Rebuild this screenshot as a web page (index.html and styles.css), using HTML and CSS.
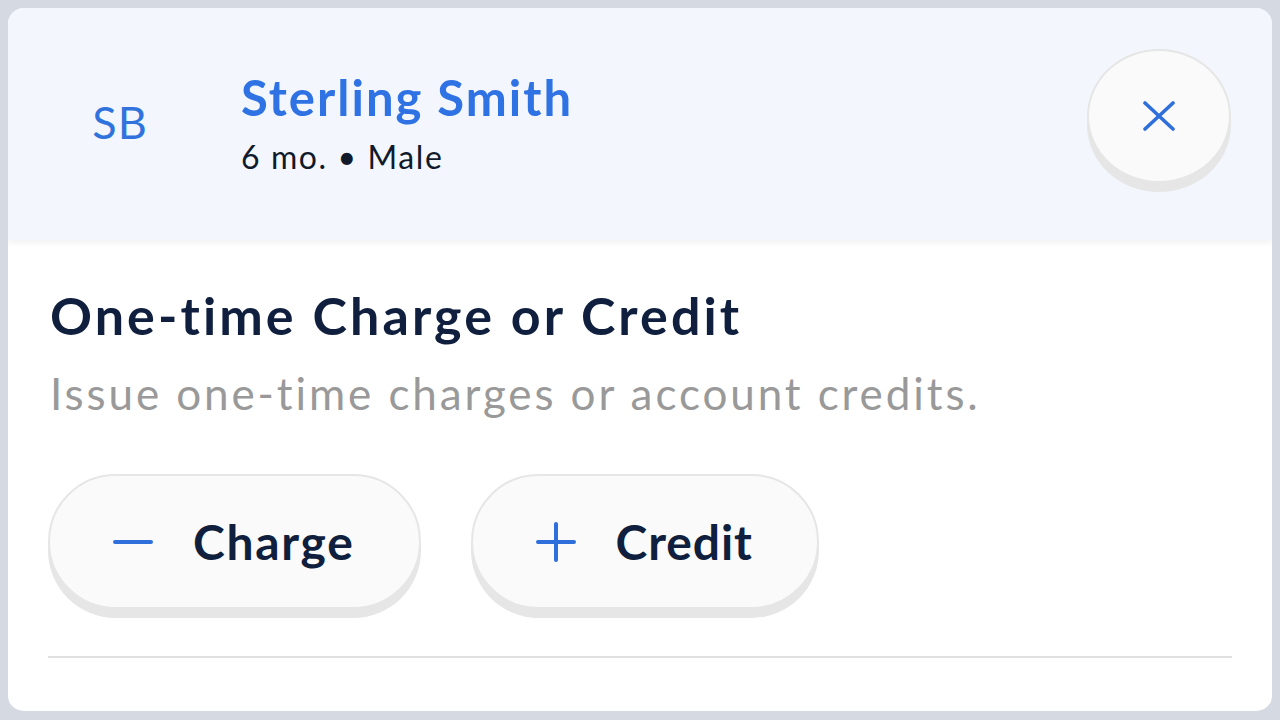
FILE: index.html
```html
<!DOCTYPE html>
<html lang="en">
<head>
<meta charset="utf-8">
<title>One-time Charge or Credit</title>
<link rel="stylesheet" href="styles.css">
</head>
<body>
<div class="frame">
  <header class="header">
    <div class="avatar">SB</div>
    <div class="who">
      <div class="name">Sterling Smith</div>
      <div class="meta">6 mo. • Male</div>
    </div>
    <button class="close" aria-label="Close">
      <svg width="32" height="30" viewBox="0 0 32 30"><path d="M2 2 L30 28 M30 2 L2 28" stroke="#2f6fdc" stroke-width="3.6" stroke-linecap="round" fill="none"/></svg>
    </button>
  </header>
  <main class="body">
    <h1 class="title">One-time Charge or Credit</h1>
    <p class="desc">Issue one-time charges or account credits.</p>
    <div class="actions">
      <button class="pill">
        <svg width="40" height="40" viewBox="0 0 40 40"><path d="M2 20 H38" stroke="#2f6fdc" stroke-width="4" stroke-linecap="round"/></svg>
        <span class="pill-label pill-label-charge">Charge</span>
      </button>
      <button class="pill">
        <svg width="40" height="40" viewBox="0 0 40 40"><path d="M2 20 H38 M20 2 V38" stroke="#2f6fdc" stroke-width="4" stroke-linecap="round"/></svg>
        <span class="pill-label pill-label-credit">Credit</span>
      </button>
    </div>
    <hr class="divider">
  </main>
</div>
</body>
</html>
```

FILE: styles.css
```css
* { box-sizing: border-box; }
html, body { margin: 0; padding: 0; background: #d5dae2; }
body {
  width: 1280px;
  height: 720px;
  font-family: Lato, "Open Sans", sans-serif;
  font-variant-ligatures: none;
}

.frame {
  width: 1280px;
  height: 720px;
  border: 8px solid #d5dae2;
  border-bottom-width: 9px;
  border-radius: 24px;
  background: #ffffff;
  overflow: hidden;
  display: flex;
  flex-direction: column;
}

.header {
  height: 232px;
  flex: none;
  background: #f3f7fd;
  display: flex;
  align-items: center;
  padding: 0 41px 0 42px;
  box-shadow: 0 3px 6px rgba(0, 0, 0, 0.05);
  position: relative;
  z-index: 1;
}

.avatar {
  width: 140px;
  height: 140px;
  flex: none;
  display: flex;
  align-items: center;
  justify-content: center;
  color: #3173dc;
  font-size: 45px;
  font-weight: 400;
  letter-spacing: 1px;
  margin-top: -4px;
}

.who { margin-left: 51px; margin-top: -2px; }
.name {
  color: #2f72e4;
  font-size: 49px;
  font-weight: 700;
  line-height: 56px;
  letter-spacing: 2px;
}
.meta {
  color: #111a2b;
  font-size: 32px;
  line-height: 40px;
  margin-top: 12px;
  letter-spacing: 1.6px;
}

.close {
  margin-left: auto;
  align-self: flex-start;
  margin-top: 41px;
  width: 144px;
  height: 134px;
  border-radius: 50%;
  border: 2px solid #e6e6e6;
  background: #fafafa;
  box-shadow: 0 9px 0 #e6e6e6;
  display: flex;
  align-items: center;
  justify-content: center;
  padding: 0;
}

.body { padding: 45px 40px 0 40px; }

.title {
  margin: 0;
  color: #0f1f3d;
  font-size: 52px;
  font-weight: 700;
  line-height: 60px;
  padding-left: 2px;
  letter-spacing: 3.1px;
}
.desc {
  margin: 22px 0 0;
  color: #999999;
  font-size: 44px;
  line-height: 52px;
  padding-left: 2px;
  letter-spacing: 2.9px;
}

.actions {
  display: flex;
  gap: 50px;
  margin-top: 55px;
}
.pill {
  height: 135px;
  border-radius: 68px;
  border: 2px solid #e6e6e6;
  background: #fafafa;
  box-shadow: 0 9px 0 #e6e6e6;
  display: flex;
  align-items: center;
  gap: 40px;
  padding: 0 64px 0 63px;
  font-family: inherit;
  color: #0f1f3d;
  font-size: 48px;
  font-weight: 700;
}
.pill-label-charge { letter-spacing: 1.7px; }
.pill-label-credit { letter-spacing: 0.9px; }

.divider {
  margin: 47px 0 0;
  border: 0;
  height: 2px;
  background: #e0e0e0;
}
```
